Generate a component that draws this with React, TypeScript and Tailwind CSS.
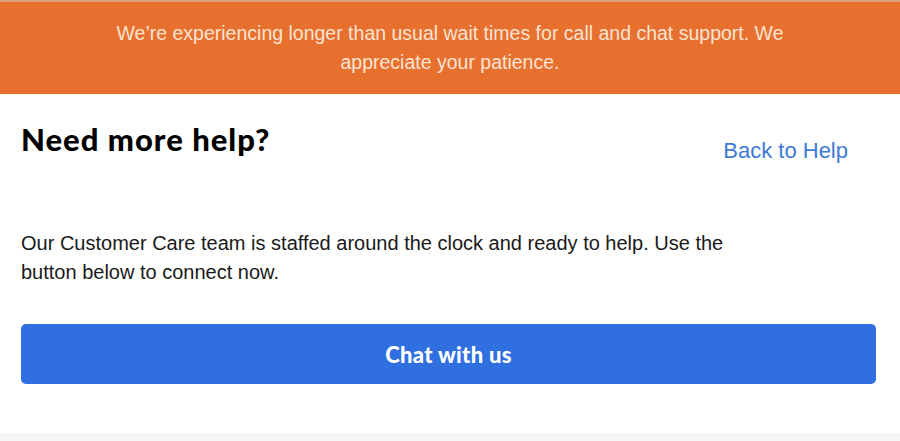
export default function App() {
  return (
    <div className="w-[900px] h-[441px] bg-white flex flex-col font-['Liberation_Sans',sans-serif]">
      {/* Wait-time notice */}
      <div className="border-t-2 border-[#d9a27e] bg-[#e8702f] h-[94px] flex items-center justify-center">
        <p className="max-w-[700px] text-center text-[19.5px] leading-[29px] text-[#fbe3d2]">
          We’re experiencing longer than usual wait times for call and chat support. We appreciate your patience.
        </p>
      </div>

      <div className="flex-1 px-[21px]">
        <div className="flex items-start justify-between pt-[24px]">
          <h2 className="font-['Lato',sans-serif] font-black text-[31px] leading-[42px] text-black tracking-[1px]">
            Need more help?
          </h2>
          <a className="mt-[19px] mr-[31px] text-[22px] leading-[28px] text-[#3f7ad4]">Back to Help</a>
        </div>

        <p className="mt-[64px] max-w-[750px] text-[20px] leading-[29px] text-[#1a1a1a]">
          Our Customer Care team is staffed around the clock and ready to help. Use the button below to connect now.
        </p>

        <button className="mt-[37px] w-[855px] h-[60px] rounded-[5px] bg-[#2f6fe0] text-white font-['Lato',sans-serif] font-black text-[22px] tracking-[0.3px]">
          Chat with us
        </button>
      </div>

      <div className="h-[8px] bg-[#f6f6f6]" />
    </div>
  );
}
